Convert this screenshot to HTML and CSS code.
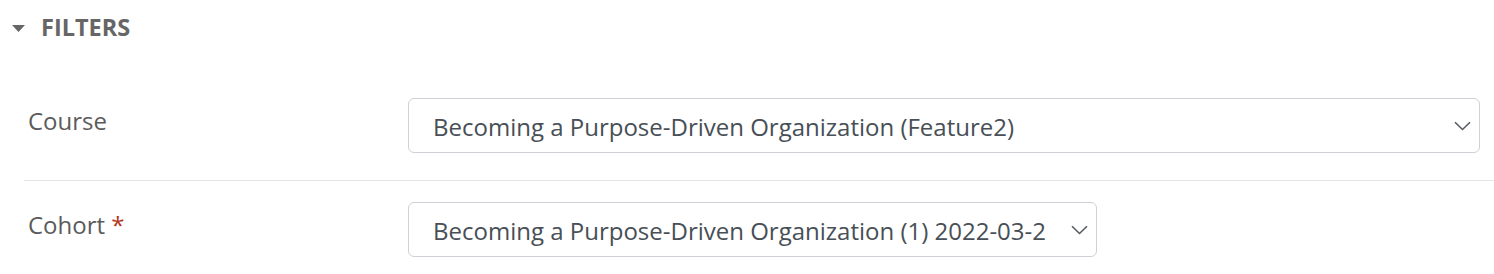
FILE: index.html
```html
<!DOCTYPE html>
<html lang="en">
<head>
<meta charset="utf-8">
<title>Filters</title>
<link rel="stylesheet" href="styles.css">
</head>
<body>
  <div class="header">
    <svg class="caret" width="13" height="7" viewBox="0 0 13 7"><path d="M0 0 H13 L6.5 7 Z" fill="#666"/></svg>
    <span class="title">FILTERS</span>
  </div>
  <div class="filters">
    <div class="row row-divided">
      <div class="label">Course</div>
      <div class="select">
        <span class="value">Becoming a Purpose-Driven Organization (Feature2)</span>
        <svg class="chevron" width="17" height="10" viewBox="0 0 17 10"><path d="M1 1.2 L8.5 8.5 L16 1.2" fill="none" stroke="#555b61" stroke-width="1.6"/></svg>
      </div>
    </div>
    <div class="row">
      <div class="label">Cohort <span class="req">*</span></div>
      <div class="select select-narrow">
        <span class="value">Becoming a Purpose-Driven Organization (1) 2022-03-2</span>
        <svg class="chevron" width="17" height="10" viewBox="0 0 17 10"><path d="M1 1.2 L8.5 8.5 L16 1.2" fill="none" stroke="#555b61" stroke-width="1.6"/></svg>
      </div>
    </div>
  </div>
</body>
</html>
```

FILE: styles.css
```css
html, body {
  margin: 0;
  padding: 0;
  background: #ffffff;
}

body {
  font-family: "Open Sans", "Noto Sans", sans-serif;
  font-size: 24px;
  line-height: 36px;
}

.header {
  display: flex;
  align-items: center;
  gap: 16px;
  padding: 9px 0 0 12px;
  height: 36px;
}

.caret {
  display: block;
  margin-top: 3px;
}

.title {
  font-weight: 700;
  color: #666666;
  font-size: 23.5px;
}

.filters {
  margin: 32px 0 0 24px;
}

.row {
  display: grid;
  grid-template-columns: 384px 1fr;
  justify-items: start;
  padding: 21px 14px 27px 0;
}

.row-divided {
  border-bottom: 1px solid #e4e4e4;
}

.label {
  padding: 5px 0 0 4px;
  color: #5b5b5b;
}

.req {
  color: #b0361c;
}

.select {
  box-sizing: border-box;
  width: 100%;
  height: 55px;
  display: flex;
  align-items: center;
  border: 1px solid #cdd1d5;
  border-radius: 6px;
  padding: 0 8px 0 24px;
  color: #484f56;
}

.select-narrow {
  width: 689px;
}

.value {
  flex: 1;
  min-width: 0;
  white-space: nowrap;
  margin-right: 20px;
  margin-top: 2px;
}

.chevron {
  display: block;
  flex: none;
}
```
